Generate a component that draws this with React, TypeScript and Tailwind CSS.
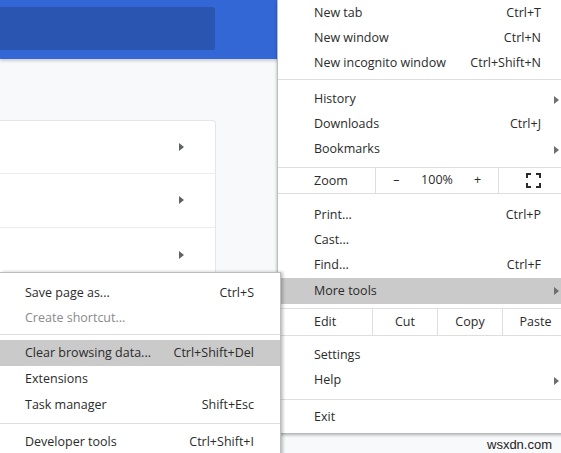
const font = { fontFamily: '"Open Sans", "Noto Sans", sans-serif' };

function Arrow({ color = "#6e6e6e" }: { color?: string }) {
  return (
    <svg width="5" height="8" viewBox="0 0 5 8">
      <path d="M0 0L5 4L0 8Z" fill={color} />
    </svg>
  );
}

interface RowProps {
  label: string;
  shortcut?: string;
  arrow?: boolean;
  active?: boolean;
  muted?: boolean;
  h?: string;
}

function MainRow({ label, shortcut, arrow, active, h = "h-[25px]" }: RowProps) {
  return (
    <div className={`flex items-center ${h} pl-[36px] ${active ? "bg-[#cacaca]" : ""}`}>
      <span className="flex-1">{label}</span>
      {shortcut && <span className="pr-[27px]">{shortcut}</span>}
      {arrow && (
        <span className="pr-[9px]">
          <Arrow />
        </span>
      )}
    </div>
  );
}

function SubRow({ label, shortcut, active, muted, h = "h-[25px]" }: RowProps) {
  return (
    <div
      className={`flex items-center ${h} pl-[25px] pr-[26px] ${active ? "bg-[#cacaca]" : ""} ${
        muted ? "text-[#8a8a8a]" : ""
      }`}
    >
      <span className="flex-1">{label}</span>
      {shortcut && <span>{shortcut}</span>}
    </div>
  );
}

function FullscreenIcon() {
  return (
    <svg width="15" height="15" viewBox="0 0 15 15" fill="none" stroke="#2a2a2a" strokeWidth="2">
      <path d="M1 5V1H5" />
      <path d="M10 1H14V5" />
      <path d="M14 10V14H10" />
      <path d="M5 14H1V10" />
    </svg>
  );
}

export default function App() {
  return (
    <div
      className="relative w-[561px] h-[453px] overflow-hidden bg-[#f8f9fa] text-[12.5px] text-[#2b2b2b]"
      style={font}
    >
      {/* page behind the menus */}
      <div className="h-[59px] bg-[#3367d6] pt-[7px] shadow-[0_2px_3px_rgba(0,0,0,0.18)]">
        <div className="w-[215px] h-[43px] rounded-r-[3px] bg-[#2a55b1]" />
      </div>
      <div className="pt-[61px]">
        <div className="w-[216px] h-[200px] bg-white border border-l-0 border-[#e6e6e6] rounded-tr-[4px]">
          {["h-[53px]", "h-[54px]", "h-[54px]"].map((h, i) => (
            <div
              key={i}
              className={`flex items-center justify-end pr-[31px] ${h} ${i < 2 ? "border-b border-[#ececec]" : ""}`}
            >
              <span className="-mt-[1px]">
                <Arrow color="#5f6368" />
              </span>
            </div>
          ))}
        </div>
      </div>

      <div
        className="absolute left-[487px] top-[435px] text-[13px] text-[#222]"
        style={{ fontFamily: '"Liberation Sans", Arial, sans-serif' }}
      >
        wsxdn.com
      </div>

      {/* main chrome menu */}
      <div className="absolute left-[277px] top-0 w-[291px] h-[433px] pt-[1px] bg-white border-l border-[#bdbdbd] shadow-[0_2px_3px_rgba(0,0,0,0.3)]">
        <MainRow label="New tab" shortcut="Ctrl+T" />
        <MainRow label="New window" shortcut="Ctrl+N" />
        <MainRow label="New incognito window" shortcut="Ctrl+Shift+N" />
        <div className="mt-[3px] mb-[7px] h-px bg-[#dedede]" />
        <MainRow label="History" arrow />
        <MainRow label="Downloads" shortcut="Ctrl+J" />
        <MainRow label="Bookmarks" arrow />
        <div className="mt-[5px] flex h-[27px] border-y border-[#dedede]">
          <div className="w-[98px] pl-[36px] flex items-center pt-[1px] border-r border-[#dedede]">Zoom</div>
          <div className="w-[123px] grid grid-cols-3 items-center text-center border-r border-[#dedede]">
            <span>–</span>
            <span>100%</span>
            <span>+</span>
          </div>
          <div className="flex-1 flex items-center justify-center">
            <FullscreenIcon />
          </div>
        </div>
        <div className="h-[9px]" />
        <MainRow label="Print..." shortcut="Ctrl+P" />
        <MainRow label="Cast..." />
        <MainRow label="Find..." shortcut="Ctrl+F" />
        <MainRow label="More tools" arrow active h="h-[26px]" />
        <div className="mt-[4px] flex h-[28px] border-y border-[#dedede]">
          <div className="w-[95px] pl-[36px] flex items-center border-r border-[#dedede]">Edit</div>
          <div className="w-[65px] flex items-center justify-center border-r border-[#dedede]">Cut</div>
          <div className="w-[65px] flex items-center justify-center border-r border-[#dedede]">Copy</div>
          <div className="flex-1 flex items-center justify-center">Paste</div>
        </div>
        <div className="h-[7px]" />
        <MainRow label="Settings" />
        <MainRow label="Help" arrow />
        <div className="mt-[5.5px] mb-[5px] h-px bg-[#dedede]" />
        <MainRow label="Exit" />
      </div>

      {/* more tools submenu */}
      <div className="absolute left-0 top-[272px] w-[281px] h-[200px] bg-white border-t border-r border-[#bdbdbd] shadow-[2px_0_3px_rgba(0,0,0,0.25)] pt-[7.5px]">
        <SubRow label="Save page as..." shortcut="Ctrl+S" />
        <SubRow label="Create shortcut..." muted />
        <div className="mt-[3.5px] mb-[5px] h-px bg-[#dedede]" />
        <SubRow label="Clear browsing data..." shortcut="Ctrl+Shift+Del" active h="h-[26px]" />
        <SubRow label="Extensions" h="h-[26px]" />
        <SubRow label="Task manager" shortcut="Shift+Esc" h="h-[26px]" />
        <div className="mt-[4.5px] mb-[6.5px] h-px bg-[#dedede]" />
        <SubRow label="Developer tools" shortcut="Ctrl+Shift+I" />
      </div>
    </div>
  );
}
